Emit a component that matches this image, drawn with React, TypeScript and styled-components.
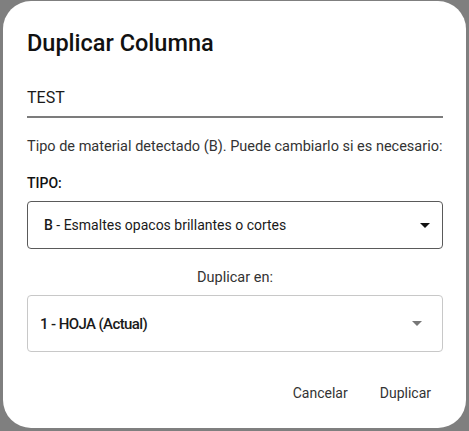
import React from "react";
import styled, { createGlobalStyle } from "styled-components";

const Global = createGlobalStyle`
  html, body { margin: 0; padding: 0; background: #7f7f7f; }
  body { font-family: Roboto, "Noto Sans", sans-serif; width: 469px; height: 431px; overflow: hidden; }
`;

const Dialog = styled.div`
  margin: 1px 0 0 3px;
  width: 463px;
  height: 427px;
  box-sizing: border-box;
  background: #fff;
  border-radius: 28px;
  padding: 24px 23px 0 24px;
  display: flex;
  flex-direction: column;
`;

const Title = styled.h2`
  margin: 0;
  font-size: 23.5px;
  font-weight: 500;
  line-height: 36px;
  color: #111;
`;

const TextField = styled.div`
  margin-top: 24px;
  height: 33px;
  border-bottom: 2px solid #7c7c7c;
  font-size: 16px;
  line-height: 26px;
  color: #1a1a1a;
  box-sizing: border-box;
`;

const Info = styled.p`
  margin: 19px 0 0;
  font-size: 14.5px;
  line-height: 20px;
  color: #333;
  white-space: nowrap;
`;

const Label = styled.div`
  margin-top: 16px;
  font-size: 14px;
  font-weight: 500;
  line-height: 20px;
  color: #111;
`;

const Select = styled.div<{ $light?: boolean; $h: number; $pad: number }>`
  margin-top: 8px;
  height: ${(p) => p.$h}px;
  box-sizing: border-box;
  border: 1px solid ${(p) => (p.$light ? "#c8c8c8" : "#5a5a5a")};
  border-radius: 4px;
  display: flex;
  align-items: center;
  padding: 0 12px 0 ${(p) => p.$pad}px;
`;

const SelectText = styled.span<{ $size: number; $weight: number; $spacing: number }>`
  flex: 1;
  font-size: ${(p) => p.$size}px;
  font-weight: ${(p) => p.$weight};
  letter-spacing: ${(p) => p.$spacing}px;
  color: #1a1a1a;
`;

const Strong = styled.b`
  font-weight: 500;
`;

const Arrow = styled.span<{ $color: string; $right: number }>`
  width: 0;
  height: 0;
  border-left: 5px solid transparent;
  border-right: 5px solid transparent;
  border-top: 5px solid ${(p) => p.$color};
  margin-right: ${(p) => p.$right}px;
`;

const Center = styled.div`
  margin-top: 20px;
  text-align: center;
  font-size: 14.5px;
  line-height: 18px;
  color: #333;
`;

const Actions = styled.div`
  margin-top: 25px;
  display: flex;
  justify-content: flex-end;
  gap: 8px;
`;

const Button = styled.button`
  border: none;
  background: transparent;
  font-family: inherit;
  font-size: 14px;
  color: #333;
  padding: 8px 12px;
  cursor: pointer;
`;

export default function App() {
  return (
    <>
      <Global />
      <Dialog>
        <Title>Duplicar Columna</Title>
        <TextField>TEST</TextField>
        <Info>Tipo de material detectado (B). Puede cambiarlo si es necesario:</Info>
        <Label>TIPO:</Label>
        <Select $h={48} $pad={16}>
          <SelectText $size={14} $weight={400} $spacing={0}>
            <Strong>B</Strong> - Esmaltes opacos brillantes o cortes
          </SelectText>
          <Arrow $color="#111" $right={0} />
        </Select>
        <Center>Duplicar en:</Center>
        <Select $light $h={57} $pad={12}>
          <SelectText $size={15} $weight={500} $spacing={-0.6}>1 - HOJA (Actual)</SelectText>
          <Arrow $color="#777" $right={8} />
        </Select>
        <Actions>
          <Button>Cancelar</Button>
          <Button>Duplicar</Button>
        </Actions>
      </Dialog>
    </>
  );
}
